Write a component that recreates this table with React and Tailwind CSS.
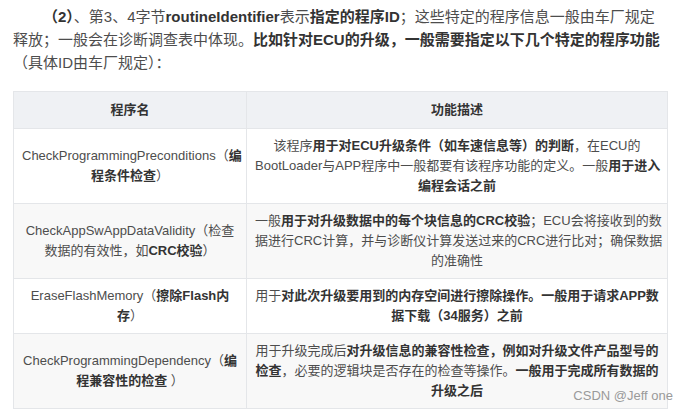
import React from 'react';

const rows = [
  {
    name: [
      <>CheckProgrammingPreconditions（<b>编</b></>,
      <><b>程条件检查</b>）</>,
    ],
    desc: [
      <>该程序<b>用于对ECU升级条件（如车速信息等）的判断</b>，在ECU的</>,
      <>BootLoader与APP程序中一般都要有该程序功能的定义。一般<b>用于进入</b></>,
      <><b>编程会话之前</b></>,
    ],
  },
  {
    name: [
      <>CheckAppSwAppDataValidity（检查</>,
      <>数据的有效性，如<b>CRC校验</b>）</>,
    ],
    desc: [
      <>一般<b>用于对升级数据中的每个块信息的CRC校验</b>；ECU会将接收到的数</>,
      <>据进行CRC计算，并与诊断仪计算发送过来的CRC进行比对；确保数据</>,
      <>的准确性</>,
    ],
  },
  {
    name: [
      <>EraseFlashMemory（<b>擦除Flash内</b></>,
      <><b>存</b>）</>,
    ],
    desc: [
      <>用于<b>对此次升级要用到的内存空间进行擦除操作。一般用于请求APP数</b></>,
      <><b>据下载（34服务）之前</b></>,
    ],
  },
  {
    name: [
      <>CheckProgrammingDependency（<b>编</b></>,
      <><b>程兼容性的检查</b> ）</>,
    ],
    desc: [
      <>用于升级完成后<b>对升级信息的兼容性检查，例如对升级文件产品型号的</b></>,
      <><b>检查</b>，必要的逻辑块是否存在的检查等操作。<b>一般用于完成所有数据的</b></>,
      <><b>升级之后</b></>,
    ],
  },
];

const Lines = ({ lines }) => (
  <>
    {lines.map((l, i) => (
      <div key={i} className="whitespace-nowrap">{l}</div>
    ))}
  </>
);

export default function App() {
  return (
    <div className="relative w-[688px] h-[411px] overflow-hidden bg-white text-[#4d4d4d] font-['Liberation_Sans','Noto_Sans_CJK_SC',sans-serif] [&_b]:text-[#333] [&_b]:font-bold">
      <div className="pl-[13px] pt-[5px] text-[15px] leading-[23px]">
        <div className="whitespace-nowrap pl-[30px]">
          <b>（2）</b>、第3、4字节<b>routineIdentifier</b>表示<b>指定的程序ID</b>；这些特定的程序信息一般由车厂规定
        </div>
        <div className="whitespace-nowrap">
          释放；一般会在诊断调查表中体现。<b>比如针对ECU的升级，一般需要指定以下几个特定的程序功能</b>
        </div>
        <div className="whitespace-nowrap">（具体ID由车厂规定）：</div>
      </div>

      <table className="ml-[13px] mt-[17px] w-[655px] table-fixed border-collapse text-[13px] leading-[20px]">
        <thead>
          <tr className="bg-[#eff1f4]">
            <th className="w-[233px] border border-[#e4e6e9] py-[8px] text-center font-bold text-[#333]">程序名</th>
            <th className="border border-[#e4e6e9] py-[8px] text-center font-bold text-[#333]">功能描述</th>
          </tr>
        </thead>
        <tbody>
          {rows.map((r, i) => (
            <tr key={i} className={i % 2 === 1 ? 'bg-[#f8f8f8]' : 'bg-white'}>
              <td className="border border-[#e4e6e9] px-[8px] py-[7px] text-center align-middle">
                <Lines lines={r.name} />
              </td>
              <td className="border border-[#e4e6e9] px-[8px] py-[7px] text-center align-middle">
                <Lines lines={r.desc} />
              </td>
            </tr>
          ))}
        </tbody>
      </table>

      <div className="absolute right-[15px] bottom-[6px] text-[13px] text-[#9a9a9a] font-['Liberation_Sans',sans-serif]">
        CSDN @Jeff one
      </div>
    </div>
  );
}
